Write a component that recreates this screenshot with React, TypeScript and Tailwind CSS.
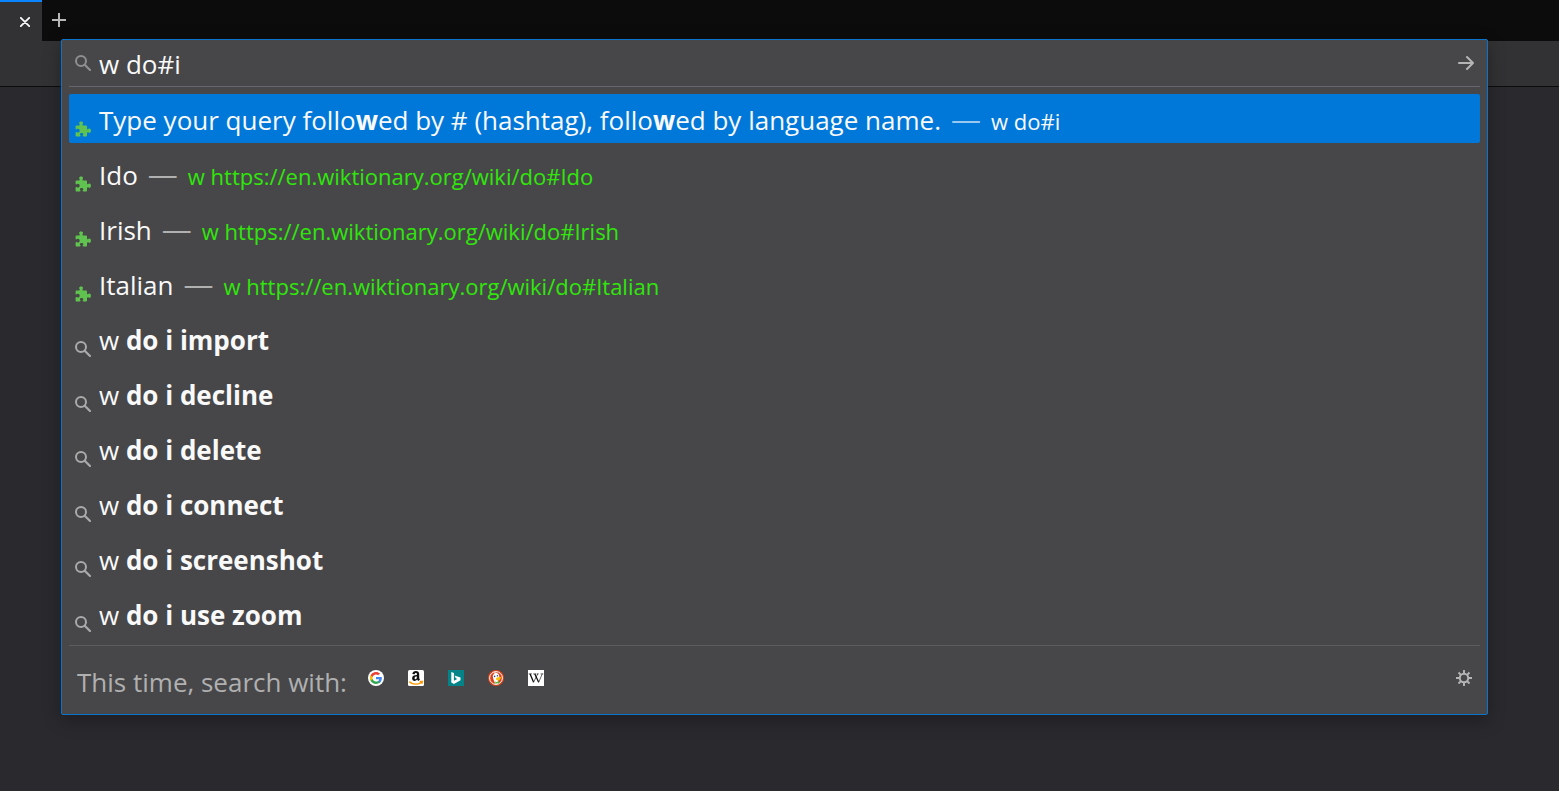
import { useState } from "react";
import type { ReactNode } from "react";

type Result = {
  id: string;
  kind: "extension" | "search";
  title: ReactNode;
  url?: string;
};

const results: Result[] = [
  {
    id: "hint",
    kind: "extension",
    title: (
      <>
        Type your query follo<b>w</b>ed by # (hashtag), follo<b>w</b>ed by language name.
      </>
    ),
    url: "w do#i",
  },
  { id: "ido", kind: "extension", title: "Ido", url: "w https://en.wiktionary.org/wiki/do#Ido" },
  { id: "irish", kind: "extension", title: "Irish", url: "w https://en.wiktionary.org/wiki/do#Irish" },
  { id: "italian", kind: "extension", title: "Italian", url: "w https://en.wiktionary.org/wiki/do#Italian" },
  ...["import", "decline", "delete", "connect", "screenshot", "use zoom"].map(
    (word): Result => ({
      id: word,
      kind: "search",
      title: (
        <>
          w <b>do i {word}</b>
        </>
      ),
    }),
  ),
];

function SearchIcon({ className }: { className: string }) {
  return (
    <svg viewBox="0 0 16 16" className={className} fill="none" stroke="currentColor" aria-hidden="true">
      <circle cx="6" cy="6" r="5" strokeWidth="2" />
      <path d="M9.7 9.7 15 15" strokeWidth="2.2" strokeLinecap="round" />
    </svg>
  );
}

function PuzzleIcon() {
  return (
    <svg viewBox="0 0 16 16" className="size-4 shrink-0" fill="#60c24f" aria-hidden="true">
      <path d="M14.4 7.6c-.6 0-.8.7-1.5.7-.5 0-.9-.3-.9-.9V5.500c0-.6-.4-1-1-1H8.300c-.6 0-.9-.3-.9-.8 0-.6.7-.9.7-1.600C8.100 1.100 7.300.4 6.100.4S4.100 1.100 4.100 2.100c0 .7.7 1 .7 1.600 0 .5-.3.8-.9.8H1.600c-.6 0-1 .4-1 1v2.200c0 .5.3.8.7.8.6 0 .9-.7 1.700-.7 1 0 1.700.8 1.700 1.900s-.7 1.900-1.700 1.900c-.8 0-1.100-.7-1.700-.7-.4 0-.7.3-.7.8v2.700c0 .6.4 1 1 1h3.100c.5 0 .8-.3.8-.7 0-.5-.6-.7-.6-1.400 0-.9.8-1.400 1.700-1.400s1.700.5 1.700 1.400c0 .7-.6.9-.6 1.400 0 .4.3.7.8.7H11c.6 0 1-.4 1-1v-2.200c0-.6.4-.9.9-.9.7 0 .9.7 1.500.7.9 0 1.500-.9 1.500-2.200s-.6-2.200-1.500-2.200z" />
    </svg>
  );
}

function GoogleIcon() {
  return (
    <svg viewBox="0 0 16 16" className="size-4" aria-hidden="true">
      <circle cx="8" cy="8" r="8" fill="#fff" />
      <g transform="translate(8 8) scale(1.12) translate(-8 -8)">
        <path d="M13.200 8.100c0-.4 0-.8-.1-1.100H8v2.200h2.900c-.1.700-.5 1.200-1.100 1.600v1.500h1.800c1-1 1.600-2.400 1.600-4.200z" fill="#4285f4" />
        <path d="M8 13.400c1.500 0 2.700-.5 3.600-1.300L9.800 10.700c-.5.300-1.100.5-1.800.5-1.400 0-2.600-.9-3-2.200H3.100v1.500C4 12.200 5.800 13.400 8 13.400z" fill="#34a853" />
        <path d="M5 9c-.1-.3-.2-.7-.2-1s.1-.7.2-1V5.500H3.100C2.800 6.200 2.600 7.100 2.600 8s.2 1.800.5 2.500z" fill="#fbbc05" />
        <path d="M8 4.800c.8 0 1.500.3 2 .8l1.600-1.600C10.700 3.100 9.500 2.600 8 2.600c-2.200 0-4 1.200-4.900 2.900L5 7c.4-1.300 1.600-2.200 3-2.200z" fill="#ea4335" />
      </g>
    </svg>
  );
}

function AmazonIcon() {
  return (
    <svg viewBox="0 0 16 16" className="size-4" aria-hidden="true">
      <rect width="16" height="16" rx="1.500" fill="#fff" />
      <path d="M4.300 4.100C4.600 2.200 6 1.100 7.900 1.100c2.100 0 3.300 1 3.300 3v3.600c0 .8.300 1.200.8 1.700l-1.700 1.500c-.6-.4-.9-.8-1.200-1.300-.6.800-1.400 1.300-2.500 1.300-1.500 0-2.500-1-2.500-2.600 0-2.400 1.900-3.400 4.800-3.400v-.7c0-.8-.3-1.200-1-1.200s-1 .4-1.200 1.300zM8.900 6.600c-1.300 0-2.300.4-2.300 1.600 0 .7.400 1 .9 1 1 0 1.400-1 1.400-2.600z" fill="#111" />
      <path d="M1.200 11.600c3.700 3.100 8.600 3.200 12.200.7M11.800 11.600l2.600-.1-.6 2.300" fill="none" stroke="#f90" strokeWidth="1.500" />
    </svg>
  );
}

function BingIcon() {
  return (
    <svg viewBox="0 0 16 16" className="size-4" aria-hidden="true">
      <rect width="16" height="16" fill="#038387" />
      <path d="M3.300 2 5.900 2.900v7.900l3.300-1.900-1.600-.8-1.100-2.600 6 2v2.800L5.900 14.100l-2.600-1.500z" fill="#fff" />
    </svg>
  );
}

function DuckIcon() {
  return (
    <svg viewBox="0 0 16 16" className="size-4" aria-hidden="true">
      <circle cx="8" cy="8" r="8" fill="#d9421a" />
      <circle cx="8" cy="8" r="6.400" fill="none" stroke="#fff" strokeWidth="1" />
      <path d="M7.200 13.900C6.500 11.500 4.700 8.500 4.800 6.300 4.900 4.700 5.700 3.900 6.800 3.700L5.300 2.800c3-.7 5.700.7 6 3.500.1 1.200-.8 2.400-1.200 3.500-.2 1.100.3 2.300.5 3.600-.9.400-2.200.7-3.400.5z" fill="#fff" />
      <path d="M8.500 7.800c1.600-.8 3.200-.9 4.600-.4.700.5-.7 1.300-1.900 1.700 1 .2 1.300.7.7 1-1.100.6-2.800.4-3.600-.4-.4-.6-.3-1.500.2-1.900z" fill="#fdc20a" />
      <circle cx="9.400" cy="5.800" r=".8" fill="#2d4f8e" />
      <circle cx="6.600" cy="6.400" r=".8" fill="#2d4f8e" />
      <path d="m7.200 11.400 1.500.7 2.400-1 .3 2.400-2.300-.2-1.700.6z" fill="#4cba3c" />
    </svg>
  );
}

function WikipediaIcon() {
  return (
    <svg viewBox="0 0 16 16" className="size-4" aria-hidden="true">
      <rect width="16" height="16" fill="#fff" />
      <path d="M5.500 12.300 9.700 4M10.700 12.300 14.200 4" fill="none" stroke="#222" strokeWidth=".7" />
      <path d="M2.100 4 5.600 12.200M6.800 4l3.900 8.200" stroke="#111" strokeWidth="1.300" />
      <path d="M.7 3.900h3.200M5.300 3.900h2.800M8.700 3.900h2M12.600 3.900h2.700" stroke="#111" strokeWidth=".7" />
    </svg>
  );
}

function GearIcon() {
  return (
    <svg viewBox="0 0 16 16" className="size-4" fill="none" stroke="currentColor" strokeWidth="2" aria-hidden="true">
      <circle cx="8" cy="8" r="4.200" />
      <path d="M8 0v4M8 12v4M0 8h4M12 8h4M2.500 2.500l2.600 2.600M10.900 10.900l2.600 2.600M13.500 2.500l-2.600 2.600M5.100 10.900l-2.600 2.600" strokeWidth="1.900" />
    </svg>
  );
}

const engines = [
  { name: "Google", Icon: GoogleIcon },
  { name: "Amazon", Icon: AmazonIcon },
  { name: "Bing", Icon: BingIcon },
  { name: "DuckDuckGo", Icon: DuckIcon },
  { name: "Wikipedia", Icon: WikipediaIcon },
];

export default function App() {
  const [query, setQuery] = useState("w do#i");
  const [selected, setSelected] = useState("hint");

  return (
    <div className="relative min-h-screen bg-[#2a292e] font-['Open_Sans','Noto_Sans',sans-serif] text-[#f9f9fa]">
      <header>
        <div className="flex h-[41px] bg-[#0c0c0c]">
          <div className="flex w-[42px] items-center justify-end border-t-2 border-[#0a84ff] bg-[#323234] pr-3">
            <button aria-label="Close tab" className="flex">
              <svg viewBox="0 0 10 10" className="size-2.5" stroke="currentColor" strokeWidth="1.800" strokeLinecap="round" aria-hidden="true">
                <path d="M.8.8l8.400 8.400M9.200.8.8 9.200" />
              </svg>
            </button>
          </div>
          <button aria-label="New tab" className="flex items-center px-2.5 pb-0.5 text-[#b8b8b9]">
            <svg viewBox="0 0 14 14" className="size-3.5" stroke="currentColor" strokeWidth="2" aria-hidden="true">
              <path d="M7 0v14M0 7h14" />
            </svg>
          </button>
        </div>
        <div className="h-[46px] border-b border-[#0c0c0d] bg-[#323234]" />
      </header>

      <section className="absolute top-[39px] right-[71px] left-[61px] rounded-xs border border-[#0a74cc] bg-[#474749] px-[7px] shadow-[0_5px_18px_rgba(0,0,0,0.3)]">
        <form className="flex h-[47px] items-center border-b border-[#65666e] px-1.5" onSubmit={(e) => e.preventDefault()}>
          <SearchIcon className="size-4 shrink-0 text-[#8f8f91]" />
          <input
            aria-label="Search or enter address"
            className="ml-2 h-10 min-w-0 flex-1 bg-transparent pt-0.5 text-[26px] outline-none"
            value={query}
            onChange={(e) => setQuery(e.target.value)}
          />
          <button aria-label="Go" className="flex text-[#b5b5b6]">
            <svg viewBox="0 0 16 16" className="size-4" fill="none" stroke="currentColor" strokeWidth="2" strokeLinecap="round" strokeLinejoin="round" aria-hidden="true">
              <path d="M1 8h14M9 2l6 6-6 6" />
            </svg>
          </button>
        </form>

        <ul className="flex flex-col gap-1.5 py-[7px]">
          {results.map(({ id, kind, title, url }) => {
            const active = id === selected;
            return (
              <li key={id}>
                <button
                  onClick={() => setSelected(id)}
                  className={`flex h-[49px] w-full items-end rounded-xs px-1.5 pb-1.5 text-left ${active ? "bg-[#0078d9]" : ""}`}
                >
                  {kind === "extension" ? <PuzzleIcon /> : <SearchIcon className="size-4 shrink-0 text-[#aaaaab]" />}
                  <span className="ml-2 flex items-baseline text-[26px] leading-[34px] whitespace-nowrap">
                    <span className="whitespace-pre">{title}</span>
                    {url && (
                      <>
                        <span className={`mx-2.5 text-[30px] leading-none ${active ? "text-[#99c9f0]" : "text-[#b0b0b1]"}`}>—</span>
                        <span className={`text-[22px] leading-none ${active ? "" : "text-[#30e60b]"}`}>{url}</span>
                      </>
                    )}
                  </span>
                </button>
              </li>
            );
          })}
        </ul>

        <footer className="flex h-[69px] items-center gap-[21px] border-t border-[#5c5c5e] px-2 pb-1">
          <span className="pt-2 text-[26px] leading-9 text-[#b0b0b1]">This time, search with:</span>
          <div className="flex gap-6">
            {engines.map(({ name, Icon }) => (
              <button key={name} aria-label={name} className="flex">
                <Icon />
              </button>
            ))}
          </div>
          <button aria-label="Search settings" className="ml-auto flex text-[#b5b5b6]">
            <GearIcon />
          </button>
        </footer>
      </section>
    </div>
  );
}
